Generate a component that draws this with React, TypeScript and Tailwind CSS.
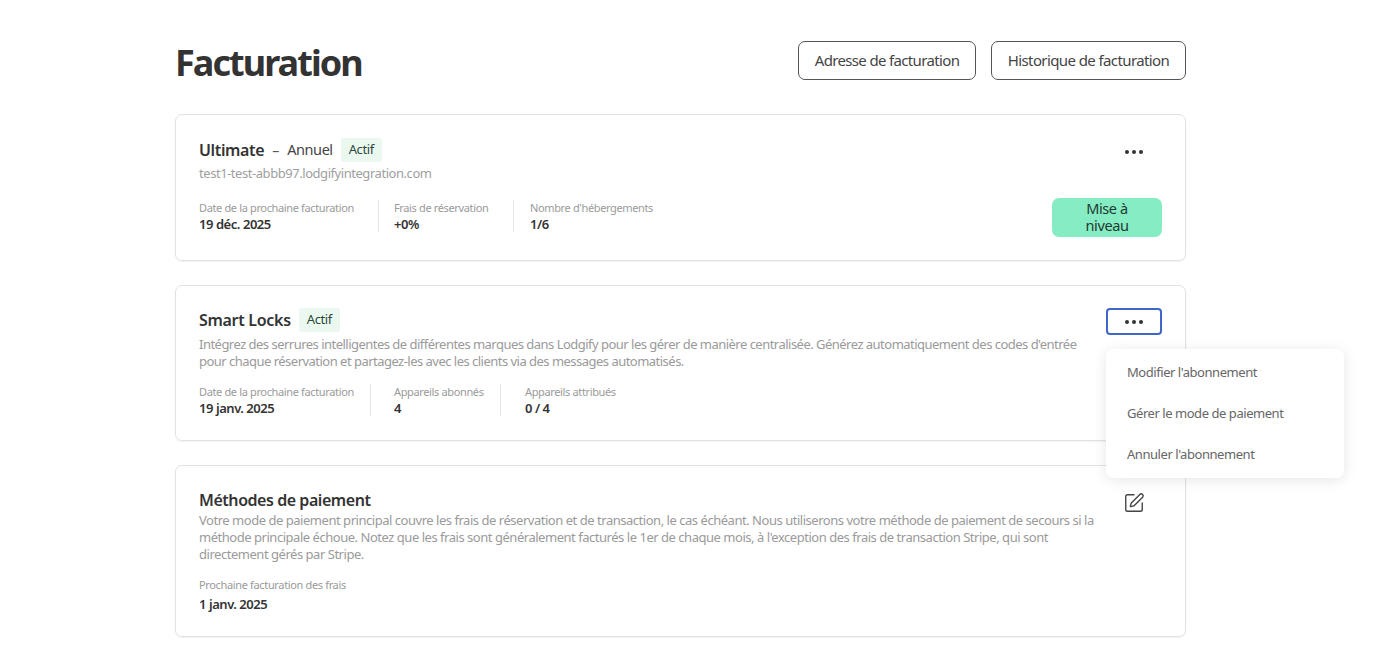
import { SquarePen } from "lucide-react";

const font = { fontFamily: '"Noto Sans", sans-serif' };

const Badge = () => (
  <span className="flex h-[24px] items-center rounded-[3px] bg-[#ebf8f0] px-[8px] text-[13px] tracking-[-0.4px] text-[#2c4a3c]">Actif</span>
);

const Dots = () => (
  <span className="flex items-center gap-[3px]">
    <span className="size-[4px] rounded-full bg-[#333]" />
    <span className="size-[4px] rounded-full bg-[#333]" />
    <span className="size-[4px] rounded-full bg-[#333]" />
  </span>
);

const Stat = ({ label, value, className }: { label: string; value: string; className?: string }) => (
  <div className={className}>
    <div className="text-[11px] leading-[16px] tracking-[-0.36px] text-[#9a9a9a]">{label}</div>
    <div className="text-[13px] leading-[16px] font-semibold tracking-[-0.45px] text-[#333]">{value}</div>
  </div>
);

const divider = "border-r border-[#e4e4e4]";

const App = () => {
  return (
    <div style={font} className="h-[646px] overflow-hidden bg-white pl-[175px]">
      <div className="w-[1011px]">
        <header className="flex h-[114px] items-start justify-between pt-[41px]">
          <h1 className="text-[36px] leading-[44px] font-bold tracking-[-1.95px] text-[#333]">Facturation</h1>
          <div className="flex gap-[15px]">
            <button className="h-[39px] w-[178px] rounded-[7px] border border-[#555] text-[15px] tracking-[-0.65px] text-[#444]">Adresse de facturation</button>
            <button className="h-[39px] w-[195px] rounded-[7px] border border-[#555] text-[15px] tracking-[-0.6px] text-[#444]">Historique de facturation</button>
          </div>
        </header>

        <section className="h-[147px] rounded-[7px] border border-[#e2e2e2] pt-[23px] pr-[23px] pl-[23px] shadow-[0_1px_2px_rgba(0,0,0,0.06)]">
          <div className="flex items-start justify-between">
            <div>
              <div className="flex h-[24px] items-center gap-[8px]">
                <span className="text-[16px] font-semibold tracking-[-0.35px] text-[#333]">Ultimate</span>
                <span className="text-[14px] text-[#555]">–</span>
                <span className="text-[14.5px] tracking-[-0.45px] text-[#444]">Annuel</span>
                <Badge />
              </div>
              <p className="mt-[2px] text-[13px] leading-[18px] tracking-[-0.45px] text-[#a0a0a0]">test1-test-abbb97.lodgifyintegration.com</p>
              <div className="mt-[18px] flex h-[32px]">
                <Stat label="Date de la prochaine facturation" value="19 déc. 2025" className={`w-[180px] ${divider}`} />
                <Stat label="Frais de réservation" value="+0%" className={`w-[135px] pl-[15px] ${divider}`} />
                <Stat label="Nombre d'hébergements" value="1/6" className="pl-[16px]" />
              </div>
            </div>
            <div className="mt-[1px] flex w-[110px] flex-col items-end">
              <div className="flex h-[26px] w-[56px] items-center justify-center"><Dots /></div>
              <button className="mt-[33px] h-[39px] w-[110px] rounded-[7px] bg-[#86ecc3] pb-[2px] text-[14.5px] leading-[17px] tracking-[-0.4px] text-[#1d3a30]">Mise à<br />niveau</button>
            </div>
          </div>
        </section>

        <section className="relative mt-[24px] h-[156px] rounded-[7px] border border-[#e2e2e2] pt-[22px] pr-[23px] pl-[23px] shadow-[0_1px_2px_rgba(0,0,0,0.06)]">
          <div className="flex items-start justify-between">
            <div className="w-[890px]">
              <div className="flex h-[24px] items-center gap-[8px]">
                <span className="text-[16px] font-semibold tracking-[-0.3px] text-[#333]">Smart Locks</span>
                <Badge />
              </div>
              <p className="mt-[4px] text-[13px] leading-[17px] tracking-[-0.52px] text-[#9a9a9a]">
                Intégrez des serrures intelligentes de différentes marques dans Lodgify pour les gérer de manière centralisée. Générez automatiquement des codes d'entrée pour chaque réservation et partagez-les avec les clients via des messages automatisés.
              </p>
              <div className="mt-[14px] flex h-[32px]">
                <Stat label="Date de la prochaine facturation" value="19 janv. 2025" className={`w-[172px] ${divider}`} />
                <Stat label="Appareils abonnés" value="4" className={`w-[130px] pl-[23px] ${divider}`} />
                <Stat label="Appareils attribués" value="0 / 4" className="pl-[24px]" />
              </div>
            </div>
            <button className="flex h-[27px] w-[56px] items-center justify-center rounded-[4px] border-2 border-[#3f67c8]"><Dots /></button>
          </div>
          <div className="absolute top-[63px] left-[930px] w-[238px] rounded-[7px] bg-white py-[3px] pl-[21px] text-[13px] tracking-[-0.45px] text-[#666] shadow-[0_2px_14px_rgba(0,0,0,0.1)]">
            <div className="flex h-[41px] items-center">Modifier l'abonnement</div>
            <div className="flex h-[41px] items-center">Gérer le mode de paiement</div>
            <div className="flex h-[41px] items-center">Annuler l'abonnement</div>
          </div>
        </section>

        <section className="mt-[24px] h-[172px] rounded-[7px] border border-[#e2e2e2] pt-[24px] pr-[23px] pl-[23px] shadow-[0_1px_2px_rgba(0,0,0,0.06)]">
          <div className="flex items-start justify-between">
            <div className="w-[900px]">
              <h2 className="text-[16px] leading-[20px] font-semibold tracking-[-0.45px] text-[#333]">Méthodes de paiement</h2>
              <p className="mt-[2px] text-[13px] leading-[17px] tracking-[-0.47px] text-[#9a9a9a]">
                Votre mode de paiement principal couvre les frais de réservation et de transaction, le cas échéant. Nous utiliserons votre méthode de paiement de secours si la méthode principale échoue. Notez que les frais sont généralement facturés le 1er de chaque mois, à l'exception des frais de transaction Stripe, qui sont directement gérés par Stripe.
              </p>
              <div className="mt-[14px] text-[11px] leading-[16px] tracking-[-0.35px] text-[#9a9a9a]">Prochaine facturation des frais</div>
              <div className="mt-[3px] text-[13px] leading-[16px] font-semibold tracking-[-0.45px] text-[#333]">1 janv. 2025</div>
            </div>
            <SquarePen className="mt-[2px] mr-[17px] size-[22px] text-[#444]" strokeWidth={1.5} />
          </div>
        </section>
      </div>
    </div>
  );
};

export default App;
